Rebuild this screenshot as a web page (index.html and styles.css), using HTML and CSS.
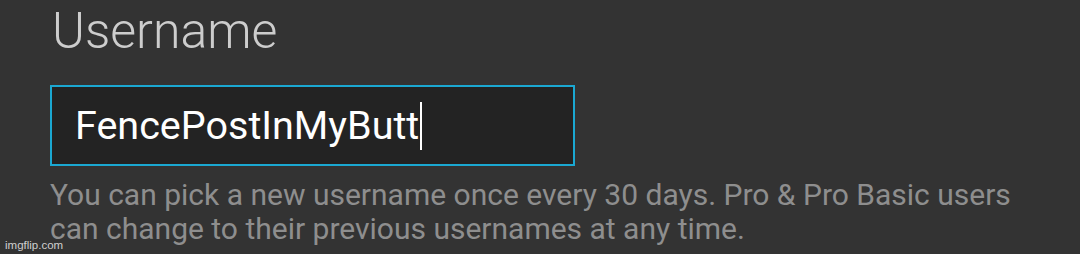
FILE: index.html
```html
<!DOCTYPE html>
<html lang="en">
<head>
  <meta charset="UTF-8">
  <title>Username</title>
  <link rel="stylesheet" href="styles.css">
</head>
<body>

<div class="field">
  <label class="field-label" for="username">Username</label>
  <div class="field-input">
    <span class="field-value">FencePostInMyButt</span><span class="caret"></span>
  </div>
  <p class="field-help">You can pick a new username once every 30 days. Pro &amp; Pro Basic users can change to their previous usernames at any time.</p>
</div>

<span class="watermark">imgflip.com</span>

</body>
</html>
```

FILE: styles.css
```css
body {
  margin: 0;
  background: #333333;
  font-family: Roboto, 'Noto Sans', sans-serif;
  height: 254px;
  overflow: hidden;
  position: relative;
}

.field {
  padding: 0 0 0 50px;
}

.field-label {
  display: block;
  font-size: 50px;
  font-weight: 300;
  line-height: 50px;
  color: #cdcdcd;
  padding-top: 6px;
  padding-left: 2px;
}

.field-input {
  margin-top: 29px;
  width: 498px;
  height: 77px;
  border: 2px solid #1ba8d2;
  background: #232323;
  display: flex;
  align-items: center;
  padding-left: 23px;
}

.field-value {
  font-size: 39.5px;
  color: #ffffff;
  line-height: 1;
}

.caret {
  width: 2px;
  height: 48px;
  background: #ffffff;
  margin-left: 1px;
}

.field-help {
  margin: 12px 0 0;
  width: 985px;
  font-size: 30px;
  line-height: 34px;
  color: #8e8e8e;
}

.watermark {
  position: absolute;
  left: 5px;
  bottom: 3px;
  font-family: 'Liberation Sans', Arial, sans-serif;
  font-size: 11.5px;
  color: #cfcfcf;
}
```
